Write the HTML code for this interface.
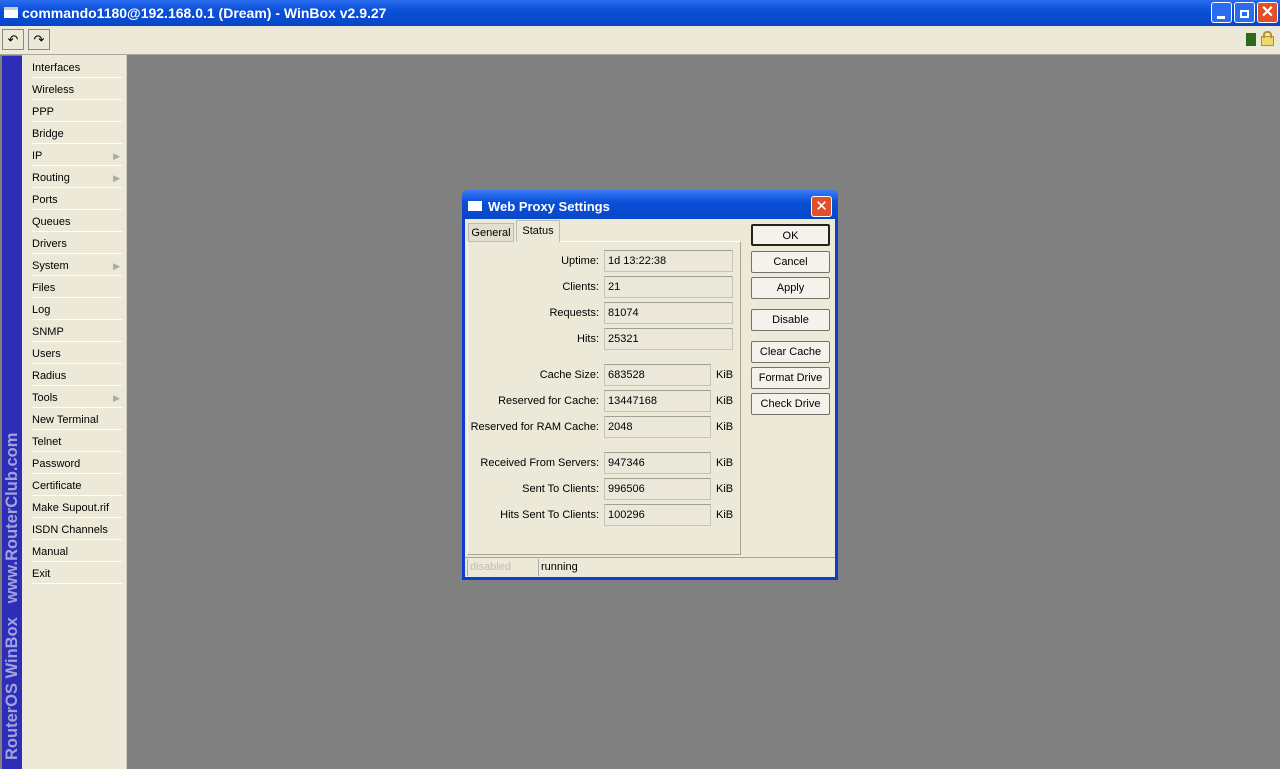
<!DOCTYPE html><html><head><style>
*{margin:0;padding:0;box-sizing:border-box}
body{width:1280px;height:769px;overflow:hidden;background:#808080;font-family:"Liberation Sans",sans-serif;font-size:11px;position:relative}
.a{position:absolute}
#tb{left:0;top:0;width:1280px;height:26px;background:linear-gradient(#2a6cf0,#0a50d8 40%,#0846c8);color:#fff;font-weight:bold;font-size:14px}
#tool{left:0;top:26px;width:1280px;height:29px;background:#ece9d8;border-bottom:1px solid #aca899}
.tbtn{top:29px;width:22px;height:21px;border:1px solid #888;background:#ece9d8;font-size:13px;text-align:center;line-height:19px}
#strip{left:2px;top:56px;width:20px;height:713px;background:#2d2db8}
#vt{left:0;top:704px;transform-origin:0 0;transform:rotate(-90deg);color:#a0a4d8;font-weight:bold;font-size:16.5px;white-space:pre;line-height:20px}
#menu{left:22px;top:55px;width:105px;height:714px;background:#ece9d8;border-right:1px solid #d0ccc0}
.mi{position:absolute;left:10px;width:90px;font-size:11px;color:#000;height:22px;line-height:24px;border-bottom:1px solid #fff}
.mi b{position:absolute;right:2px;top:0;font-weight:normal;color:#aaa;font-size:9px}
#dlg{left:462px;top:190px;width:376px;height:390px;background:#0a3fd0;border-radius:6px 6px 0 0}
#dt{left:4px;top:0;height:30px;color:#fff;font-weight:bold;font-size:13px;line-height:34px;padding-left:22px}
#dbody{left:3px;top:29px;width:370px;height:358px;background:#ece9d8}
.lbl{position:absolute;text-align:right;width:150px;left:-16px;white-space:nowrap}
.fld{position:absolute;left:139px;width:129px;height:22px;border:1px solid #c8c4b4;border-top-color:#a0a090;background:#ebe8db;padding-left:3px;line-height:20px}
.kib{position:absolute;left:251px}
.btn{position:absolute;left:286px;width:79px;height:22px;border:1px solid #707070;background:#f4f2ea;text-align:center;line-height:21px;border-radius:2px}
</style></head><body>
<div id="tb" class="a"><div class="a" style="left:4px;top:7px;width:14px;height:11px;background:#fff;border-top:3px solid #ccc"></div><div class="a" style="left:22px;top:5px">commando1180@192.168.0.1 (Dream) - WinBox v2.9.27</div>
<div class="a" style="left:1211px;top:2px;width:21px;height:21px;background:#2a6cf0;border:1px solid #fff;border-radius:3px"><div class="a" style="left:5px;top:13px;width:8px;height:3px;background:#fff"></div></div>
<div class="a" style="left:1234px;top:2px;width:21px;height:21px;background:#2a6cf0;border:1px solid #fff;border-radius:3px"><div class="a" style="left:5px;top:7px;width:9px;height:8px;border:2px solid #fff"></div></div>
<div class="a" style="left:1257px;top:2px;width:21px;height:21px;background:#e0502c;border:1px solid #fff;border-radius:3px;color:#fff;text-align:center;line-height:19px;font-size:16px">✕</div></div>
<div id="tool" class="a"></div>
<div class="a tbtn" style="left:2px">↶</div><div class="a tbtn" style="left:28px">↷</div>
<div class="a" style="left:1246px;top:33px;width:10px;height:13px;background:#2a6a1a"></div>
<div class="a" style="left:1261px;top:36px;width:13px;height:10px;background:#f0d868;border:1px solid #b09030"></div>
<div class="a" style="left:1263px;top:31px;width:9px;height:7px;border:2px solid #b09030;border-bottom:none;border-radius:4px 4px 0 0"></div>
<div id="strip" class="a"><div id="vt" class="a">RouterOS WinBox   www.RouterClub.com</div></div>
<div id="menu" class="a">
<div class="mi" style="top:1px">Interfaces</div><div class="mi" style="top:23px">Wireless</div><div class="mi" style="top:45px">PPP</div><div class="mi" style="top:67px">Bridge</div><div class="mi" style="top:89px">IP<b>▶</b></div><div class="mi" style="top:111px">Routing<b>▶</b></div><div class="mi" style="top:133px">Ports</div><div class="mi" style="top:155px">Queues</div><div class="mi" style="top:177px">Drivers</div><div class="mi" style="top:199px">System<b>▶</b></div><div class="mi" style="top:221px">Files</div><div class="mi" style="top:243px">Log</div><div class="mi" style="top:265px">SNMP</div><div class="mi" style="top:287px">Users</div><div class="mi" style="top:309px">Radius</div><div class="mi" style="top:331px">Tools<b>▶</b></div><div class="mi" style="top:353px">New Terminal</div><div class="mi" style="top:375px">Telnet</div><div class="mi" style="top:397px">Password</div><div class="mi" style="top:419px">Certificate</div><div class="mi" style="top:441px">Make Supout.rif</div><div class="mi" style="top:463px">ISDN Channels</div><div class="mi" style="top:485px">Manual</div><div class="mi" style="top:507px">Exit</div>
</div>
<div id="dlg" class="a">
<div class="a" style="left:0;top:0;width:376px;height:30px;background:linear-gradient(#3a7cf8,#0a50d8 40%,#0846c8);border-radius:6px 6px 0 0"></div>
<div class="a" style="left:6px;top:11px;width:14px;height:10px;background:#fff"></div>
<div id="dt" class="a">Web Proxy Settings</div>
<div class="a" style="left:349px;top:6px;width:21px;height:21px;background:#e0502c;border:1px solid #fff;border-radius:3px;color:#fff;text-align:center;line-height:19px;font-size:15px">✕</div>
<div id="dbody" class="a">
<div class="a" style="left:2px;top:22px;width:274px;height:314px;border:1px solid #a8a494;border-left-color:#fff;border-top-color:#fff"></div>
<div class="a" style="left:3px;top:4px;width:46px;height:19px;border:1px solid #bbb;background:#e2dfd0;text-align:center;line-height:19px">General</div>
<div class="a" style="left:51px;top:1px;width:44px;height:22px;border:1px solid #bbb;border-bottom:none;background:#ece9d8;text-align:center;line-height:21px">Status</div>
<div style="position:absolute;left:0;top:0">
<div class="lbl" style="top:36px">Uptime:</div><div class="fld" style="top:31px;width:129px">1d 13:22:38</div>
<div class="lbl" style="top:62px">Clients:</div><div class="fld" style="top:57px">21</div>
<div class="lbl" style="top:88px">Requests:</div><div class="fld" style="top:83px">81074</div>
<div class="lbl" style="top:114px">Hits:</div><div class="fld" style="top:109px">25321</div>
<div class="lbl" style="top:150px">Cache Size:</div><div class="fld" style="top:145px;width:107px">683528</div><div class="kib" style="top:150px">KiB</div>
<div class="lbl" style="top:176px">Reserved for Cache:</div><div class="fld" style="top:171px;width:107px">13447168</div><div class="kib" style="top:176px">KiB</div>
<div class="lbl" style="top:202px">Reserved for RAM Cache:</div><div class="fld" style="top:197px;width:107px">2048</div><div class="kib" style="top:202px">KiB</div>
<div class="lbl" style="top:238px">Received From Servers:</div><div class="fld" style="top:233px;width:107px">947346</div><div class="kib" style="top:238px">KiB</div>
<div class="lbl" style="top:264px">Sent To Clients:</div><div class="fld" style="top:259px;width:107px">996506</div><div class="kib" style="top:264px">KiB</div>
<div class="lbl" style="top:290px">Hits Sent To Clients:</div><div class="fld" style="top:285px;width:107px">100296</div><div class="kib" style="top:290px">KiB</div>
</div>
<div class="btn" style="top:5px;border:2px solid #222">OK</div>
<div class="btn" style="top:32px">Cancel</div>
<div class="btn" style="top:58px">Apply</div>
<div class="btn" style="top:90px">Disable</div>
<div class="btn" style="top:122px">Clear Cache</div>
<div class="btn" style="top:148px">Format Drive</div>
<div class="btn" style="top:174px">Check Drive</div>
<div class="a" style="left:0;top:338px;width:370px;height:1px;background:#a8a494"></div>
<div class="a" style="left:2px;top:340px;width:70px;height:17px;border-left:1px solid #aaa;color:#c0bcb0;line-height:17px;padding-left:2px">disabled</div>
<div class="a" style="left:73px;top:340px;width:294px;height:17px;border-left:1px solid #aaa;line-height:17px;padding-left:2px">running</div>
</div></div>
</body></html>
